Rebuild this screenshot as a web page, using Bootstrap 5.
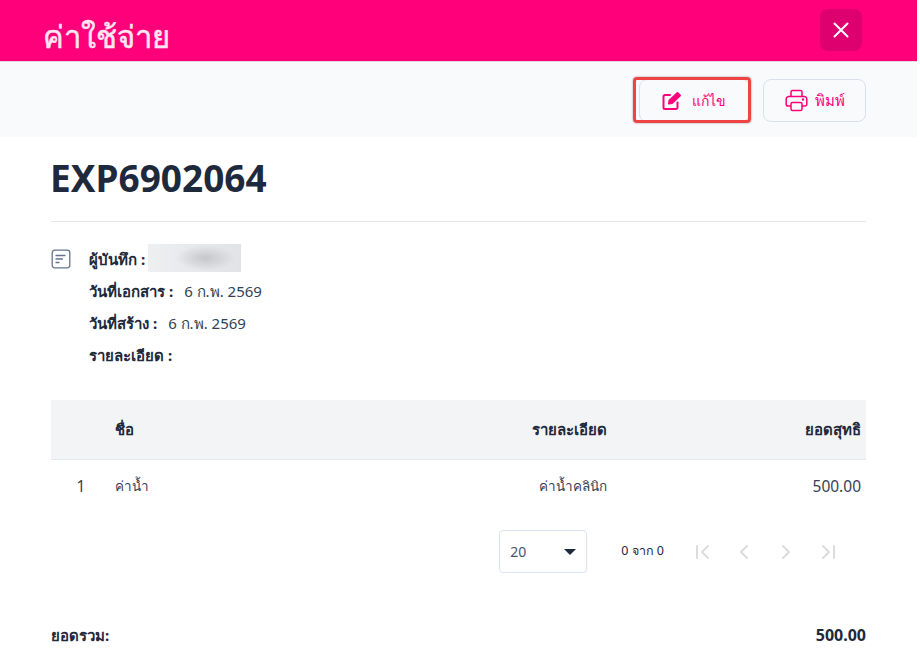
<!DOCTYPE html>
<html lang="th">
<head>
    <meta charset="UTF-8">
    <meta name="viewport" content="width=device-width, initial-scale=1.0">
    <title>ค่าใช้จ่าย</title>
    <link href="https://cdn.jsdelivr.net/npm/bootstrap@5.3.3/dist/css/bootstrap.min.css" rel="stylesheet">
    <style>
        html, body { height: 654px; overflow: hidden; }
        body { font-family: "Noto Sans", "Liberation Sans", sans-serif; color: #1e293b; font-size: 15px; background: #fff; }
        .sheet { width: 917px; }
        .top-bar { height: 62px; background: #ff007a; padding: 9px 55px 0 43px; border-bottom: 1px solid #e4d5de; }
        .top-title { color: #fff; font-size: 31px; font-weight: 500; line-height: 54px; opacity: .9; white-space: nowrap; -webkit-text-stroke: .5px #fff; }
        .close-box { width: 42px; height: 42px; background: #df0070; border-radius: 8px; }
        .tool-bar { height: 75px; background: #f8fafc; padding: 17px 51px 0 0; gap: 13px; }
        .act-btn { height: 43px; background: #fff; border: 1px solid #dbe1ea; border-radius: 8px; color: #ff007a; font-size: 15px; font-weight: 500; padding: 0; }
        .act-edit { width: 111px; gap: 10px; font-size: 14px; background: #f8fafc; padding-right: 2px; }
        .act-print { width: 103px; gap: 7px; background: #f8fafc; }
        .red-mark { position: absolute; left: -6px; top: -2px; width: 118px; height: 46px; border: 3px solid #ef4444; border-radius: 4px; box-shadow: 0 0 2px rgba(0,0,0,.45); pointer-events: none; }
        .main-area { padding: 0 51px; }
        .doc-no { font-size: 37px; font-weight: 700; line-height: 44px; margin: 19px 0 21px -1px; color: #1e293b; }
        .rule-line { border-top: 1px solid #e5e7eb; }
        .meta-wrap { padding-top: 21px; height: 178px; gap: 18px; }
        .note-icon { margin-top: 6px; flex: none; }
        .meta-row { height: 32px; line-height: 32px; white-space: nowrap; color: #334155; }
        .meta-row b { font-weight: 700; margin-right: 11px; color: #1e293b; }
        .blur-box { width: 93px; height: 28px; margin: -3px 0 0 -8px; background: radial-gradient(ellipse 30px 13px at 62% 50%, #c6c7cb, transparent), linear-gradient(90deg, #eeeff1, #e2e3e6); }
        .line-tbl { display: grid; grid-template-columns: 64px 1fr 150px 259px; }
        .tbl-head { background: #f3f4f6; height: 60px; align-items: center; font-weight: 700; border-bottom: 1px solid #e5e7eb; }
        .tbl-row { height: 53px; align-items: center; color: #334155; font-size: 13.500px; }
        .num-text { font-size: 15.500px; }
        .pad-num { text-align: center; padding-right: 4px; }
        .cell-detail { text-align: right; }
        .cell-net { text-align: right; padding-right: 5px; }
        .pager { height: 43px; margin-top: 17px; padding-right: 27px; font-size: 12.500px; color: #1e293b; }
        .size-pick { width: 88px; height: 43px; border: 1px solid #dbe3ee; border-radius: 4px; padding: 0 10px; font-size: 14px; color: #475569; }
        .drop-tip { width: 0; height: 0; border-left: 6px solid transparent; border-right: 6px solid transparent; border-top: 6px solid #1e293b; }
        .page-count { margin: 0 31px 0 34px; }
        .sum-row { margin-top: 50px; font-weight: 700; line-height: 24px; }
        .sum-val { font-size: 16px; }
    </style>
</head>
<body>
<div class="sheet">
    <div class="top-bar d-flex justify-content-between align-items-start">
        <div class="top-title">ค่าใช้จ่าย</div>
        <div class="close-box d-flex align-items-center justify-content-center">
            <svg width="16" height="16" viewBox="0 0 16 16"><path d="M1.5 1.5 14.5 14.5M14.5 1.5 1.5 14.5" stroke="#fff" stroke-width="2" stroke-linecap="round"/></svg>
        </div>
    </div>

    <div class="tool-bar d-flex justify-content-end align-items-start">
        <div class="position-relative">
            <button class="act-btn act-edit d-flex align-items-center justify-content-center" type="button">
                <svg width="20" height="20" viewBox="0 0 20 20" fill="none" stroke="#ff007a" stroke-width="2" stroke-linecap="round" stroke-linejoin="round"><path d="M8 4H3A1.500 1.500 0 0 0 1.500 5.500V16.500A1.500 1.500 0 0 0 3 18H14A1.500 1.500 0 0 0 15.500 16.500V11.500"/><path d="M7 12.500 7.500 9.500 15.500 2 18 4.500 10 12z" fill="#ff007a"/></svg>
                <span>แก้ไข</span>
            </button>
            <div class="red-mark"></div>
        </div>
        <button class="act-btn act-print d-flex align-items-center justify-content-center" type="button">
            <svg width="23" height="23" viewBox="0 0 23 23" fill="none" stroke="#ff007a" stroke-width="1.500" stroke-linejoin="round"><path d="M6 7.500V3A1.500 1.500 0 0 1 7.500 1.500H15.500A1.500 1.500 0 0 1 17 3V7.500"/><path d="M6 17H3A1.800 1.800 0 0 1 1.200 15.200V10A2.500 2.500 0 0 1 3.700 7.500H19.300A2.500 2.500 0 0 1 21.800 10V15.200A1.800 1.800 0 0 1 20 17H17"/><rect x="6" y="13.500" width="11" height="8" rx="1.500"/><circle cx="18" cy="10.500" r=".5" fill="#ff007a"/></svg>
            <span>พิมพ์</span>
        </button>
    </div>

    <div class="main-area">
        <div class="doc-no">EXP6902064</div>
        <div class="rule-line"></div>

        <div class="meta-wrap d-flex">
            <svg class="note-icon" width="20" height="20" viewBox="0 0 20 20" fill="none" stroke="#64748b" stroke-width="1.300" stroke-linecap="round"><rect x="1.200" y="1.200" width="17.600" height="17.600" rx="2.500"/><path d="M5 6.500H14M5 10H11.500M5 13.500H8"/></svg>
            <div>
                <div class="meta-row d-flex align-items-center"><b>ผู้บันทึก :</b><span class="blur-box"></span></div>
                <div class="meta-row"><b>วันที่เอกสาร :</b>6 ก.พ. 2569</div>
                <div class="meta-row"><b>วันที่สร้าง :</b>6 ก.พ. 2569</div>
                <div class="meta-row"><b>รายละเอียด :</b></div>
            </div>
        </div>

        <div class="line-tbl tbl-head">
            <div></div><div>ชื่อ</div><div class="cell-detail">รายละเอียด</div><div class="cell-net">ยอดสุทธิ</div>
        </div>
        <div class="line-tbl tbl-row">
            <div class="pad-num num-text">1</div><div>ค่าน้ำ</div><div class="cell-detail">ค่าน้ำคลินิก</div><div class="cell-net num-text">500.00</div>
        </div>

        <div class="pager d-flex justify-content-end align-items-center">
            <div class="size-pick d-flex justify-content-between align-items-center"><span>20</span><span class="drop-tip"></span></div>
            <span class="page-count">0 จาก 0</span>
            <div class="d-flex align-items-center gap-4">
                <svg width="18" height="16" viewBox="0 0 18 16" fill="none" stroke="#dcdcdc" stroke-width="2" stroke-linecap="round" stroke-linejoin="round"><path d="M2 2V14M13 2 7 8 13 14"/></svg>
                <svg width="18" height="16" viewBox="0 0 18 16" fill="none" stroke="#dcdcdc" stroke-width="2" stroke-linecap="round" stroke-linejoin="round"><path d="M10 2 4 8 10 14"/></svg>
                <svg width="18" height="16" viewBox="0 0 18 16" fill="none" stroke="#dcdcdc" stroke-width="2" stroke-linecap="round" stroke-linejoin="round"><path d="M4 2 10 8 4 14"/></svg>
                <svg width="18" height="16" viewBox="0 0 18 16" fill="none" stroke="#dcdcdc" stroke-width="2" stroke-linecap="round" stroke-linejoin="round"><path d="M13 2V14M2 2 8 8 2 14"/></svg>
            </div>
        </div>

        <div class="sum-row d-flex justify-content-between"><span>ยอดรวม:</span><span class="sum-val">500.00</span></div>
    </div>
</div>
<script src="https://cdn.jsdelivr.net/npm/bootstrap@5.3.3/dist/js/bootstrap.bundle.min.js"></script>
</body>
</html>
